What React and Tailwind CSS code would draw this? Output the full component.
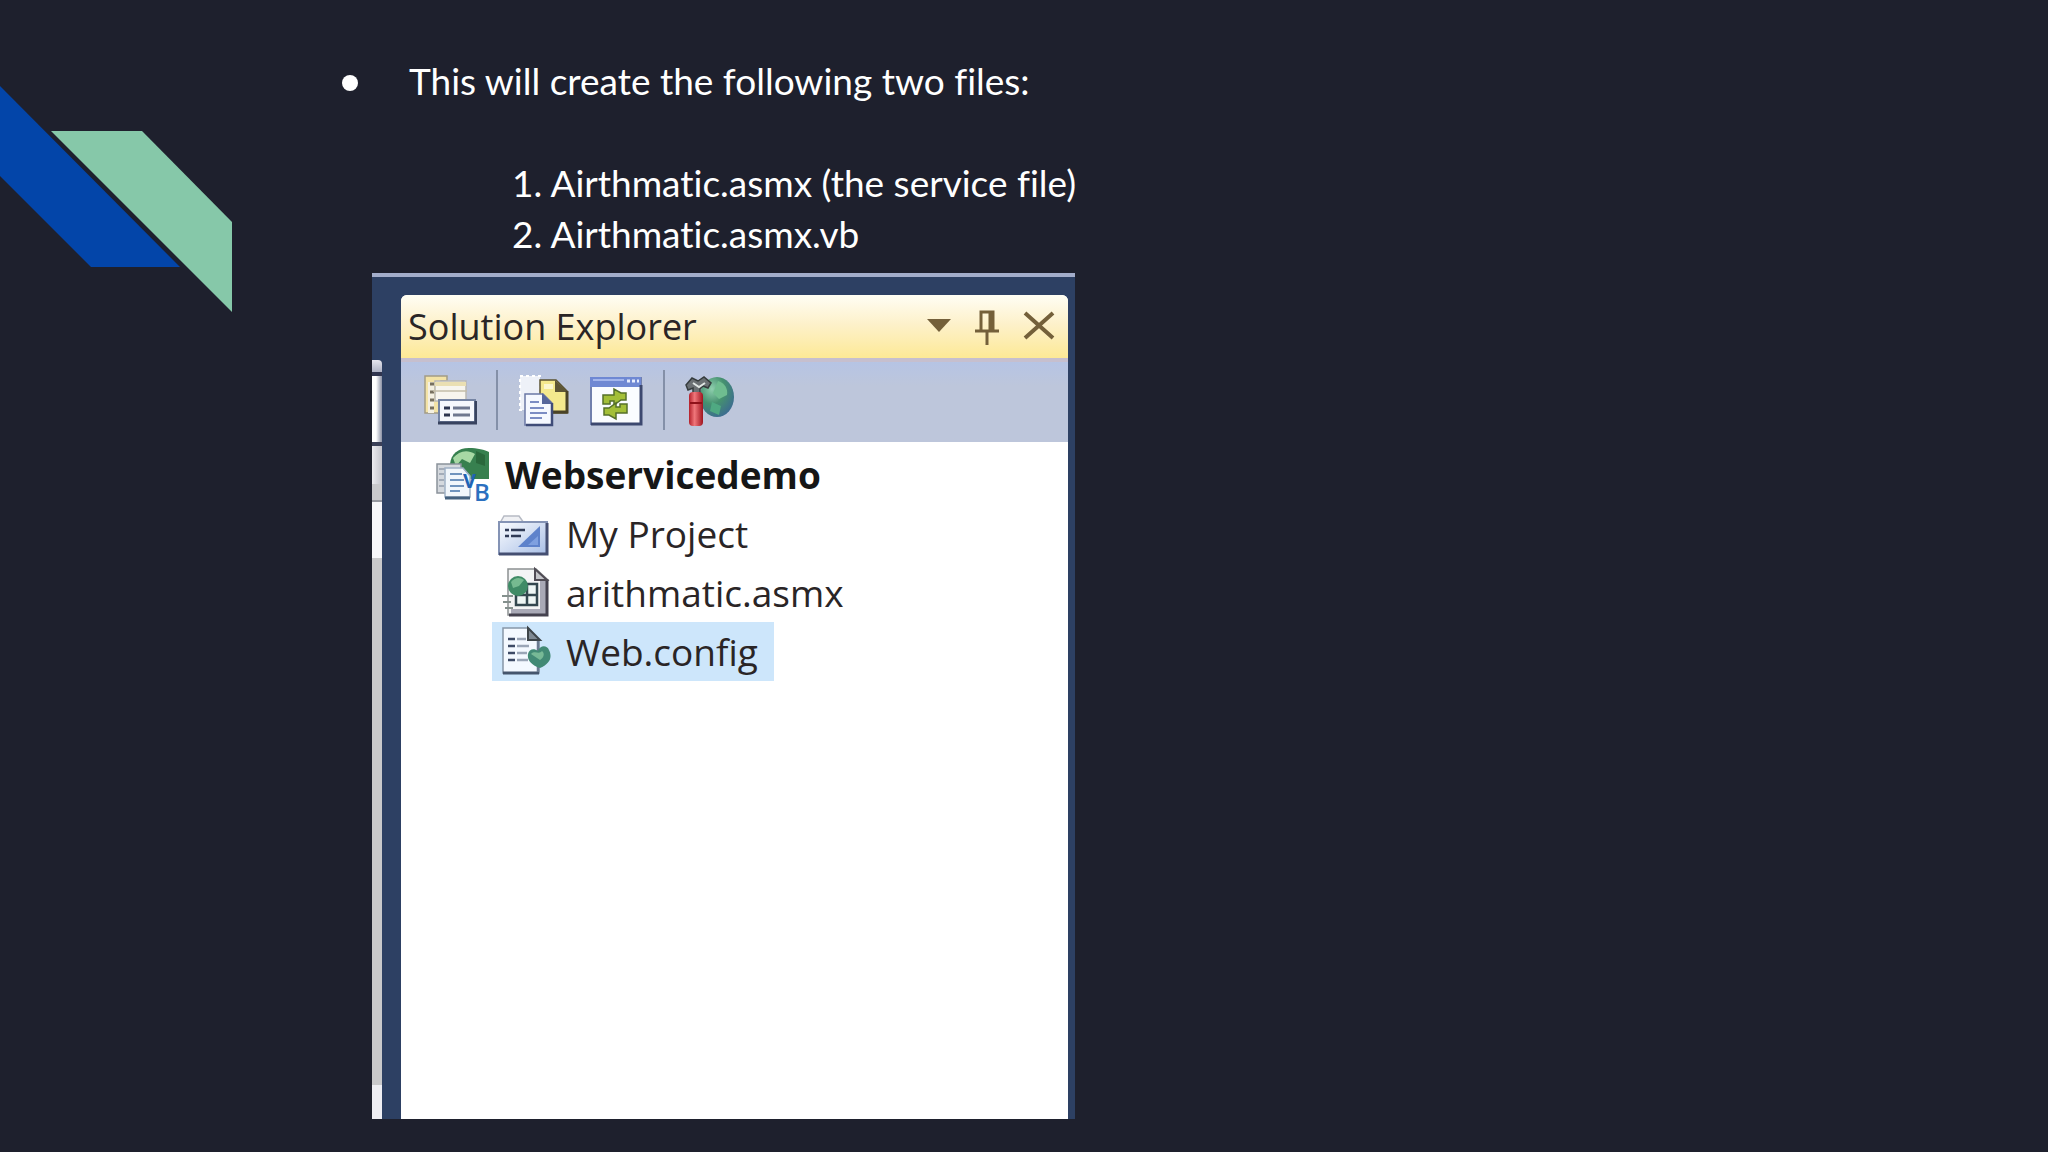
import React from 'react';

const PropertiesIcon = () => (
  <svg viewBox="0 0 54 54" className="size-[54px]" aria-hidden="true">
    <path d="M2 3h22v5h-6v32H2z" fill="#f3e3a6" stroke="#a39c86" strokeWidth="1.5" />
    <path d="M5 9h6v31H5z" fill="#f4f0e2" />
    <path d="M7 11h4M7 19h4M7 27h4M7 35h4" stroke="#77705f" strokeWidth="3" />
    <rect x="12" y="8" width="31" height="20" fill="#f7f5ee" stroke="#b9b8b5" strokeWidth="1.5" />
    <path d="M12 9h31v4H12z" fill="#eadfb2" />
    <path d="M10 18h34" stroke="#c3bda8" strokeWidth="1.5" />
    <rect x="16" y="27" width="36" height="22" fill="#f6f8fd" stroke="#7584a3" strokeWidth="2" />
    <path d="M15 50h38V28" fill="none" stroke="#38435f" strokeWidth="3" />
    <path d="M21 35h6M21 42h6" stroke="#2e3650" strokeWidth="3" />
    <path d="M30 35h17M30 42h17" stroke="#6f7890" strokeWidth="3" />
  </svg>
);

const ShowAllIcon = () => (
  <svg viewBox="0 0 54 54" className="size-[54px]" aria-hidden="true">
    <path d="M3 3h20v34H3z" fill="#eef1f8" stroke="#fff" strokeWidth="2" strokeDasharray="3 3" />
    <path d="M23 7h16l11 11v22H23z" fill="#f4e98d" stroke="#5a5232" strokeWidth="1.5" />
    <path d="M38 7v12h13z" fill="#5d5535" />
    <path d="M24 39h26V18" fill="none" stroke="#4a4327" strokeWidth="3" />
    <path d="M27 11h9v5h-9z" fill="#fbf7cf" />
    <path d="M8 21h18l9 9v22H8z" fill="#f5f8ff" stroke="#6a77a5" strokeWidth="1.5" />
    <path d="M25 20v11h11z" fill="#56669b" />
    <path d="M9 52h26V30" fill="none" stroke="#3f4c78" strokeWidth="2.5" />
    <path d="M13 29h9M13 35h14M13 40h17M13 45h12" stroke="#7b8cc4" strokeWidth="2" />
  </svg>
);

const RefreshIcon = () => (
  <svg viewBox="0 0 54 54" className="size-[54px]" aria-hidden="true">
    <rect x="1" y="5" width="50" height="46" fill="#fafcff" stroke="#7180ad" strokeWidth="2" />
    <path d="M0 4h51v10H0z" fill="#6f88d3" />
    <path d="M3 7h31" stroke="#a4b6ec" strokeWidth="2" />
    <path d="M37 8h3M42 8h3M47 8h2" stroke="#e8eeff" strokeWidth="3" />
    <path d="M1 51h50V12" fill="none" stroke="#3c486f" strokeWidth="3" />
    <path d="M13 31v-9h11v-6l7 4h5v7h-5l-7 5v-4h-4v3z" fill="#a3bf38" stroke="#55702a" strokeWidth="1.5" />
    <path d="M37 31v9H26v6l-7-4h-5v-7h5l7-5v4h4v-3z" fill="#a3bf38" stroke="#55702a" strokeWidth="1.5" />
  </svg>
);

const AdminToolIcon = () => (
  <svg viewBox="0 0 54 54" className="size-[54px]" aria-hidden="true">
    <defs>
      <radialGradient id="admin-globe" cx="35%" cy="30%" r="75%">
        <stop offset="0" stopColor="#8fcfae" />
        <stop offset=".5" stopColor="#45916f" />
        <stop offset="1" stopColor="#3c6c90" />
      </radialGradient>
      <linearGradient id="admin-handle">
        <stop offset="0" stopColor="#b3202a" />
        <stop offset=".4" stopColor="#f0767a" />
        <stop offset="1" stopColor="#a0141f" />
      </linearGradient>
    </defs>
    <ellipse cx="33" cy="24" rx="17" ry="20" fill="url(#admin-globe)" />
    <path d="M34 8c7 2 10 8 9 14l-8 4-6-6z" fill="#6fbd90" />
    <path d="M28 29l9 4-2 9-9-4z" fill="#4fa982" />
    <path d="M2 12l6-7 6 3 6-4 7 6-3 5-5-2-3 3v6H9v-7l-5 2z" fill="#6b7073" stroke="#353b3c" strokeWidth="1.5" />
    <path d="M9 10l6 4 6-4" fill="none" stroke="#dfe5e2" strokeWidth="2" />
    <rect x="5" y="19" width="14" height="34" rx="4" fill="url(#admin-handle)" />
    <path d="M6 30h12" stroke="#8f1119" strokeWidth="2" />
  </svg>
);

const ProjectIcon = () => (
  <svg viewBox="0 0 54 54" className="size-[54px] overflow-visible" aria-hidden="true">
    <path d="M14 16C15 6 22 0 33 0c8 0 16 2 20 4v27H28z" fill="#37804f" />
    <path d="M17 10c6-7 14-9 22-4l-5 9-8-4-6 7z" fill="#a7d8a4" />
    <path d="M40 3l9 4v11l-9-3z" fill="#2a683c" />
    <rect x="1" y="16" width="24" height="29" fill="#d5d9de" stroke="#8b929b" strokeWidth="1.5" />
    <path d="M3 21h18M3 26h5M3 32h5M3 38h5" stroke="#a4acb8" strokeWidth="2" />
    <path d="M9 20h18l7 8v21H9z" fill="#f1f6fb" stroke="#9fb0c5" strokeWidth="1.5" />
    <path d="M9 50h25" stroke="#45617f" strokeWidth="3" />
    <path d="M14 26h12M14 32h14M14 38h14M14 43h10" stroke="#6f93bd" strokeWidth="2" />
    <text x="27" y="40" fontSize="20" className="fill-[#1f63b4] font-['Open_Sans',sans-serif] font-bold">V</text>
    <text x="38" y="53" fontSize="24" className="fill-[#2b70c0] font-['Open_Sans',sans-serif] font-semibold">B</text>
  </svg>
);

const FolderIcon = () => (
  <svg viewBox="0 0 54 54" className="size-[54px]" aria-hidden="true">
    <defs>
      <linearGradient id="folder-face" x1="0" y1="0" x2="1" y2="1">
        <stop offset="0" stopColor="#fafcff" />
        <stop offset="1" stopColor="#a9bfe6" />
      </linearGradient>
    </defs>
    <path d="M3 16l4-7h15l5 7z" fill="#f0f1f4" stroke="#b6bac4" strokeWidth="1.5" />
    <rect x="2" y="15" width="48" height="32" fill="url(#folder-face)" stroke="#8493b5" strokeWidth="2" />
    <path d="M2 47h48V16" fill="none" stroke="#454f72" strokeWidth="3" />
    <path d="M21 40l22-21v21z" fill="#5e82cb" />
    <path d="M31 38l10-9v9z" fill="#7fa0e0" />
    <path d="M8 23h4M14 23h14M8 29h4M14 29h10" stroke="#2f3a56" strokeWidth="2.5" />
  </svg>
);

const ServiceFileIcon = () => (
  <svg viewBox="0 0 54 54" className="size-[54px]" aria-hidden="true">
    <path d="M11 3h28l11 10v36H11z" fill="#f3f4f5" stroke="#8c9091" strokeWidth="1.5" />
    <path d="M43 15h6v33H14v-5h29z" fill="#a9a9b6" />
    <path d="M12 49h38V13" fill="none" stroke="#45424f" strokeWidth="3" />
    <path d="M38 3v11h12z" fill="#c4c5c9" stroke="#504c55" strokeWidth="2" />
    <rect x="19" y="18" width="21" height="21" fill="#eef6f5" stroke="#33474f" strokeWidth="2.5" />
    <path d="M30 18v21M19 29h21" stroke="#33474f" strokeWidth="2.5" />
    <circle cx="21" cy="20" r="10" fill="#3f8b66" />
    <path d="M14 16c4-5 9-5 13-2l-5 6-6 2z" fill="#76ba90" />
    <path d="M5 30h11M6 36h8M8 42h8" stroke="#84908d" strokeWidth="2" />
  </svg>
);

const ConfigFileIcon = () => (
  <svg viewBox="0 0 54 54" className="size-[54px]" aria-hidden="true">
    <path d="M6 3h25l11 12v33H6z" fill="#f4f9ff" stroke="#8796a8" strokeWidth="1.5" />
    <path d="M6 48h36" stroke="#45556c" strokeWidth="3" />
    <path d="M41 15v32" stroke="#6b7b90" strokeWidth="2.5" />
    <path d="M31 3v12h12z" fill="#7f8992" stroke="#3e4549" strokeWidth="2" />
    <path d="M11 14h7M11 21h7M11 28h7M11 35h7" stroke="#3e4b66" strokeWidth="2.5" />
    <path d="M20 14h9M20 21h12M20 28h10M20 35h11" stroke="#9ba6b7" strokeWidth="2.5" />
    <path d="M43 43c-9-3-13-8-12-14 1-5 6-6 10-3 2-6 9-6 11-1 4 8 0 14-9 18z" fill="#428a75" />
    <path d="M34 29c4-4 8 1 11-3 3 2 2 7-2 9z" fill="#77b996" />
  </svg>
);

const toolbar = [
  [{ label: 'Properties', Icon: PropertiesIcon }],
  [
    { label: 'Show All Files', Icon: ShowAllIcon },
    { label: 'Refresh', Icon: RefreshIcon }
  ],
  [{ label: 'ASP.NET Configuration', Icon: AdminToolIcon }]
];

const files = [
  { name: 'My Project', Icon: FolderIcon },
  { name: 'arithmatic.asmx', Icon: ServiceFileIcon },
  { name: 'Web.config', Icon: ConfigFileIcon, selected: true }
];

// Edge of the editor window that shows beside the panel
const EditorEdge = () => (
  <div className="flex w-[10px] shrink-0 flex-col pt-[83px]">
    <div className="h-3 rounded-tr bg-linear-to-b from-[#e6e6ee] to-[#aeb2c4]" />
    <div className="h-1 bg-[#30354f]" />
    <div className="h-[66px] bg-linear-to-r from-white from-40% to-[#8d93a6]" />
    <div className="h-1 bg-[#3b4058]" />
    <div className="h-[38px] bg-linear-to-r from-[#ececf0] to-[#c4c5cc]" />
    <div className="h-[18px] border-b-2 border-[#95979f] bg-[#c9c9cc]" />
    <div className="h-14 bg-[#f7f7fa]" />
    <div className="flex-1 bg-[#c9c9cb]" />
    <div className="h-[34px] bg-[#eeeef3]" />
  </div>
);

const SolutionExplorer = () => (
  <section className="mt-[14px] flex w-full max-w-[703px] flex-1 border-t-4 border-[#a3adca] bg-[#2d4063] pr-[7px] font-['Open_Sans','Noto_Sans',sans-serif] text-[#2a2526]">
    <EditorEdge />
    <div className="mt-[18px] ml-[19px] flex flex-1 flex-col overflow-hidden rounded-t-md bg-white">
      <header className="flex h-[63px] items-center justify-between bg-linear-to-b from-[#fffef4] via-[#fdf1cb] via-45% to-[#fde995] pr-[13px] pl-[7px]">
        <h2 className="text-[36px] leading-[48px]">Solution Explorer</h2>
        <div className="flex gap-6">
          <button type="button" aria-label="Window position">
            <svg viewBox="0 0 24 36" className="h-9 w-6">
              <path d="M0 10h24L12 23z" fill="#74603a" />
            </svg>
          </button>
          <button type="button" aria-label="Auto hide">
            <svg viewBox="0 0 24 36" className="h-9 w-6" fill="none" stroke="#74603a">
              <path d="M6 21V3h12v18" strokeWidth="3" />
              <path d="M16 3v18" strokeWidth="5" />
              <path d="M0 22h24M12 22v14" strokeWidth="3" />
            </svg>
          </button>
          <button type="button" aria-label="Close">
            <svg viewBox="0 0 32 36" className="h-9 w-8" fill="none" stroke="#74603a" strokeWidth="4">
              <path d="M2 4l28 25M30 4L2 29" />
            </svg>
          </button>
        </div>
      </header>

      <div className="flex h-[84px] items-center gap-[19px] border-t-4 border-[#c6bfce] bg-linear-to-b from-[#b6c4e4] to-[#bdc6db] to-30% pb-1 pl-[22px]">
        {toolbar.map((group, i) => (
          <React.Fragment key={i}>
            {i > 0 && <div className="h-[60px] w-[2px] bg-[#8490a8]" />}
            {group.map(({ label, Icon }) => (
              <button key={label} type="button" aria-label={label}>
                <Icon />
              </button>
            ))}
          </React.Fragment>
        ))}
      </div>

      <ul className="flex flex-col items-start pt-[3px] text-[37px]">
        <li>
          <div className="flex h-[59px] items-center gap-[15px] pl-[35px]">
            <ProjectIcon />
            <span className="font-bold text-[#161616]">Webservicedemo</span>
          </div>
          <ul className="flex flex-col items-start pl-[91px]">
            {files.map(({ name, Icon, selected }) => (
              <li
                key={name}
                className={`flex h-[59px] items-center gap-[15px] pr-4 pl-[5px] ${selected ? 'bg-[#cde6fb]' : ''}`}
              >
                <Icon />
                <span>{name}</span>
              </li>
            ))}
          </ul>
        </li>
      </ul>
    </div>
  </section>
);

const App = () => {
  return (
    <div className="flex min-h-screen bg-[#1e202d]">
      <svg viewBox="0 0 233 227" className="mt-[86px] h-[227px] w-[233px] shrink-0" aria-hidden="true">
        <path d="M0 0L180 181H91L0 90z" fill="#0345a9" />
        <path d="M51 45h91l90 91v90z" fill="#86c8a9" />
      </svg>

      <main className="ml-[139px] flex flex-1 flex-col pt-[55px] pb-[33px]">
        <div className="font-[Lato,sans-serif] text-[37px] leading-[51px] text-white [font-variant-ligatures:none]">
          <div className="flex items-center">
            <span className="-ml-[30px] mt-1 size-4 rounded-full bg-white" />
            <p className="ml-[51px]">This will create the following two files:</p>
          </div>
          <div className="pt-[51px] pl-[140px]">
            <p>1. Airthmatic.asmx (the service file)</p>
            <p>2. Airthmatic.asmx.vb</p>
          </div>
        </div>
        <SolutionExplorer />
      </main>
    </div>
  );
};

export default App;
